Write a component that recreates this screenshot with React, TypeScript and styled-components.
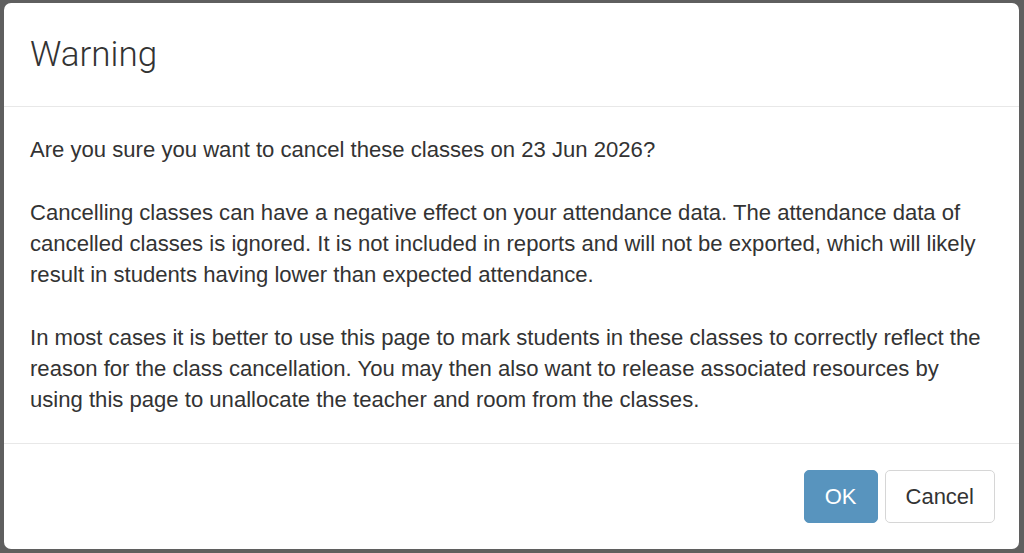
import React from 'react';
import styled, { createGlobalStyle } from 'styled-components';

const GlobalStyle = createGlobalStyle`
  html, body {
    margin: 0;
    padding: 0;
    height: 100%;
  }
  body {
    background: #5f5f5f;
    font-family: "Liberation Sans", Arial, sans-serif;
    color: #333;
  }
`;

// ─── Styled Components ───────────────────────────────────────────────────────

const Backdrop = styled.div`
  width: 1024px;
  height: 553px;
  box-sizing: border-box;
  padding: 3px 5px 4px 4px;
  display: flex;
`;

const Modal = styled.div`
  flex: 1;
  background: #fff;
  border-radius: 7px;
  display: flex;
  flex-direction: column;
  overflow: hidden;
`;

const Header = styled.div`
  padding: 26px 26px 26px 26px;
  border-bottom: 1px solid #e8e8e8;
`;

const Title = styled.h4`
  margin: 0;
  font-family: Roboto, "Liberation Sans", sans-serif;
  font-weight: 300;
  font-size: 35px;
  line-height: 51px;
  color: #333;
`;

const Body = styled.div`
  flex: 1;
  padding: 27px 26px 26px 26px;
`;

const Para = styled.p`
  margin: 0 0 32px;
  font-size: 22.1px;
  line-height: 31px;
  color: #333;
  &:last-child {
    margin-bottom: 0;
  }
`;

const Footer = styled.div`
  border-top: 1px solid #e8e8e8;
  padding: 26px 24px 26px 26px;
  display: flex;
  justify-content: flex-end;
  gap: 7px;
`;

const Btn = styled.button<{ primary?: boolean }>`
  height: 53px;
  padding: 0 20px;
  font-family: "Liberation Sans", Arial, sans-serif;
  font-size: 22px;
  border-radius: 5px;
  cursor: pointer;
  background: ${p => (p.primary ? '#5894be' : '#fff')};
  color: ${p => (p.primary ? '#fff' : '#333')};
  border: 1px solid ${p => (p.primary ? '#5894be' : '#d6d6d6')};
`;

// ─── Component ───────────────────────────────────────────────────────────────

const App: React.FC = () => {
  const date = '23 Jun 2026';

  return (
    <>
      <GlobalStyle />
      <Backdrop>
        <Modal>
          <Header>
            <Title>Warning</Title>
          </Header>
          <Body>
            <Para>Are you sure you want to cancel these classes on {date}?</Para>
            <Para>
              Cancelling classes can have a negative effect on your attendance data. The attendance data of
              cancelled classes is ignored. It is not included in reports and will not be exported, which will likely
              result in students having lower than expected attendance.
            </Para>
            <Para>
              In most cases it is better to use this page to mark students in these classes to correctly reflect the
              reason for the class cancellation. You may then also want to release associated resources by
              using this page to unallocate the teacher and room from the classes.
            </Para>
          </Body>
          <Footer>
            <Btn primary>OK</Btn>
            <Btn>Cancel</Btn>
          </Footer>
        </Modal>
      </Backdrop>
    </>
  );
};

export default App;
